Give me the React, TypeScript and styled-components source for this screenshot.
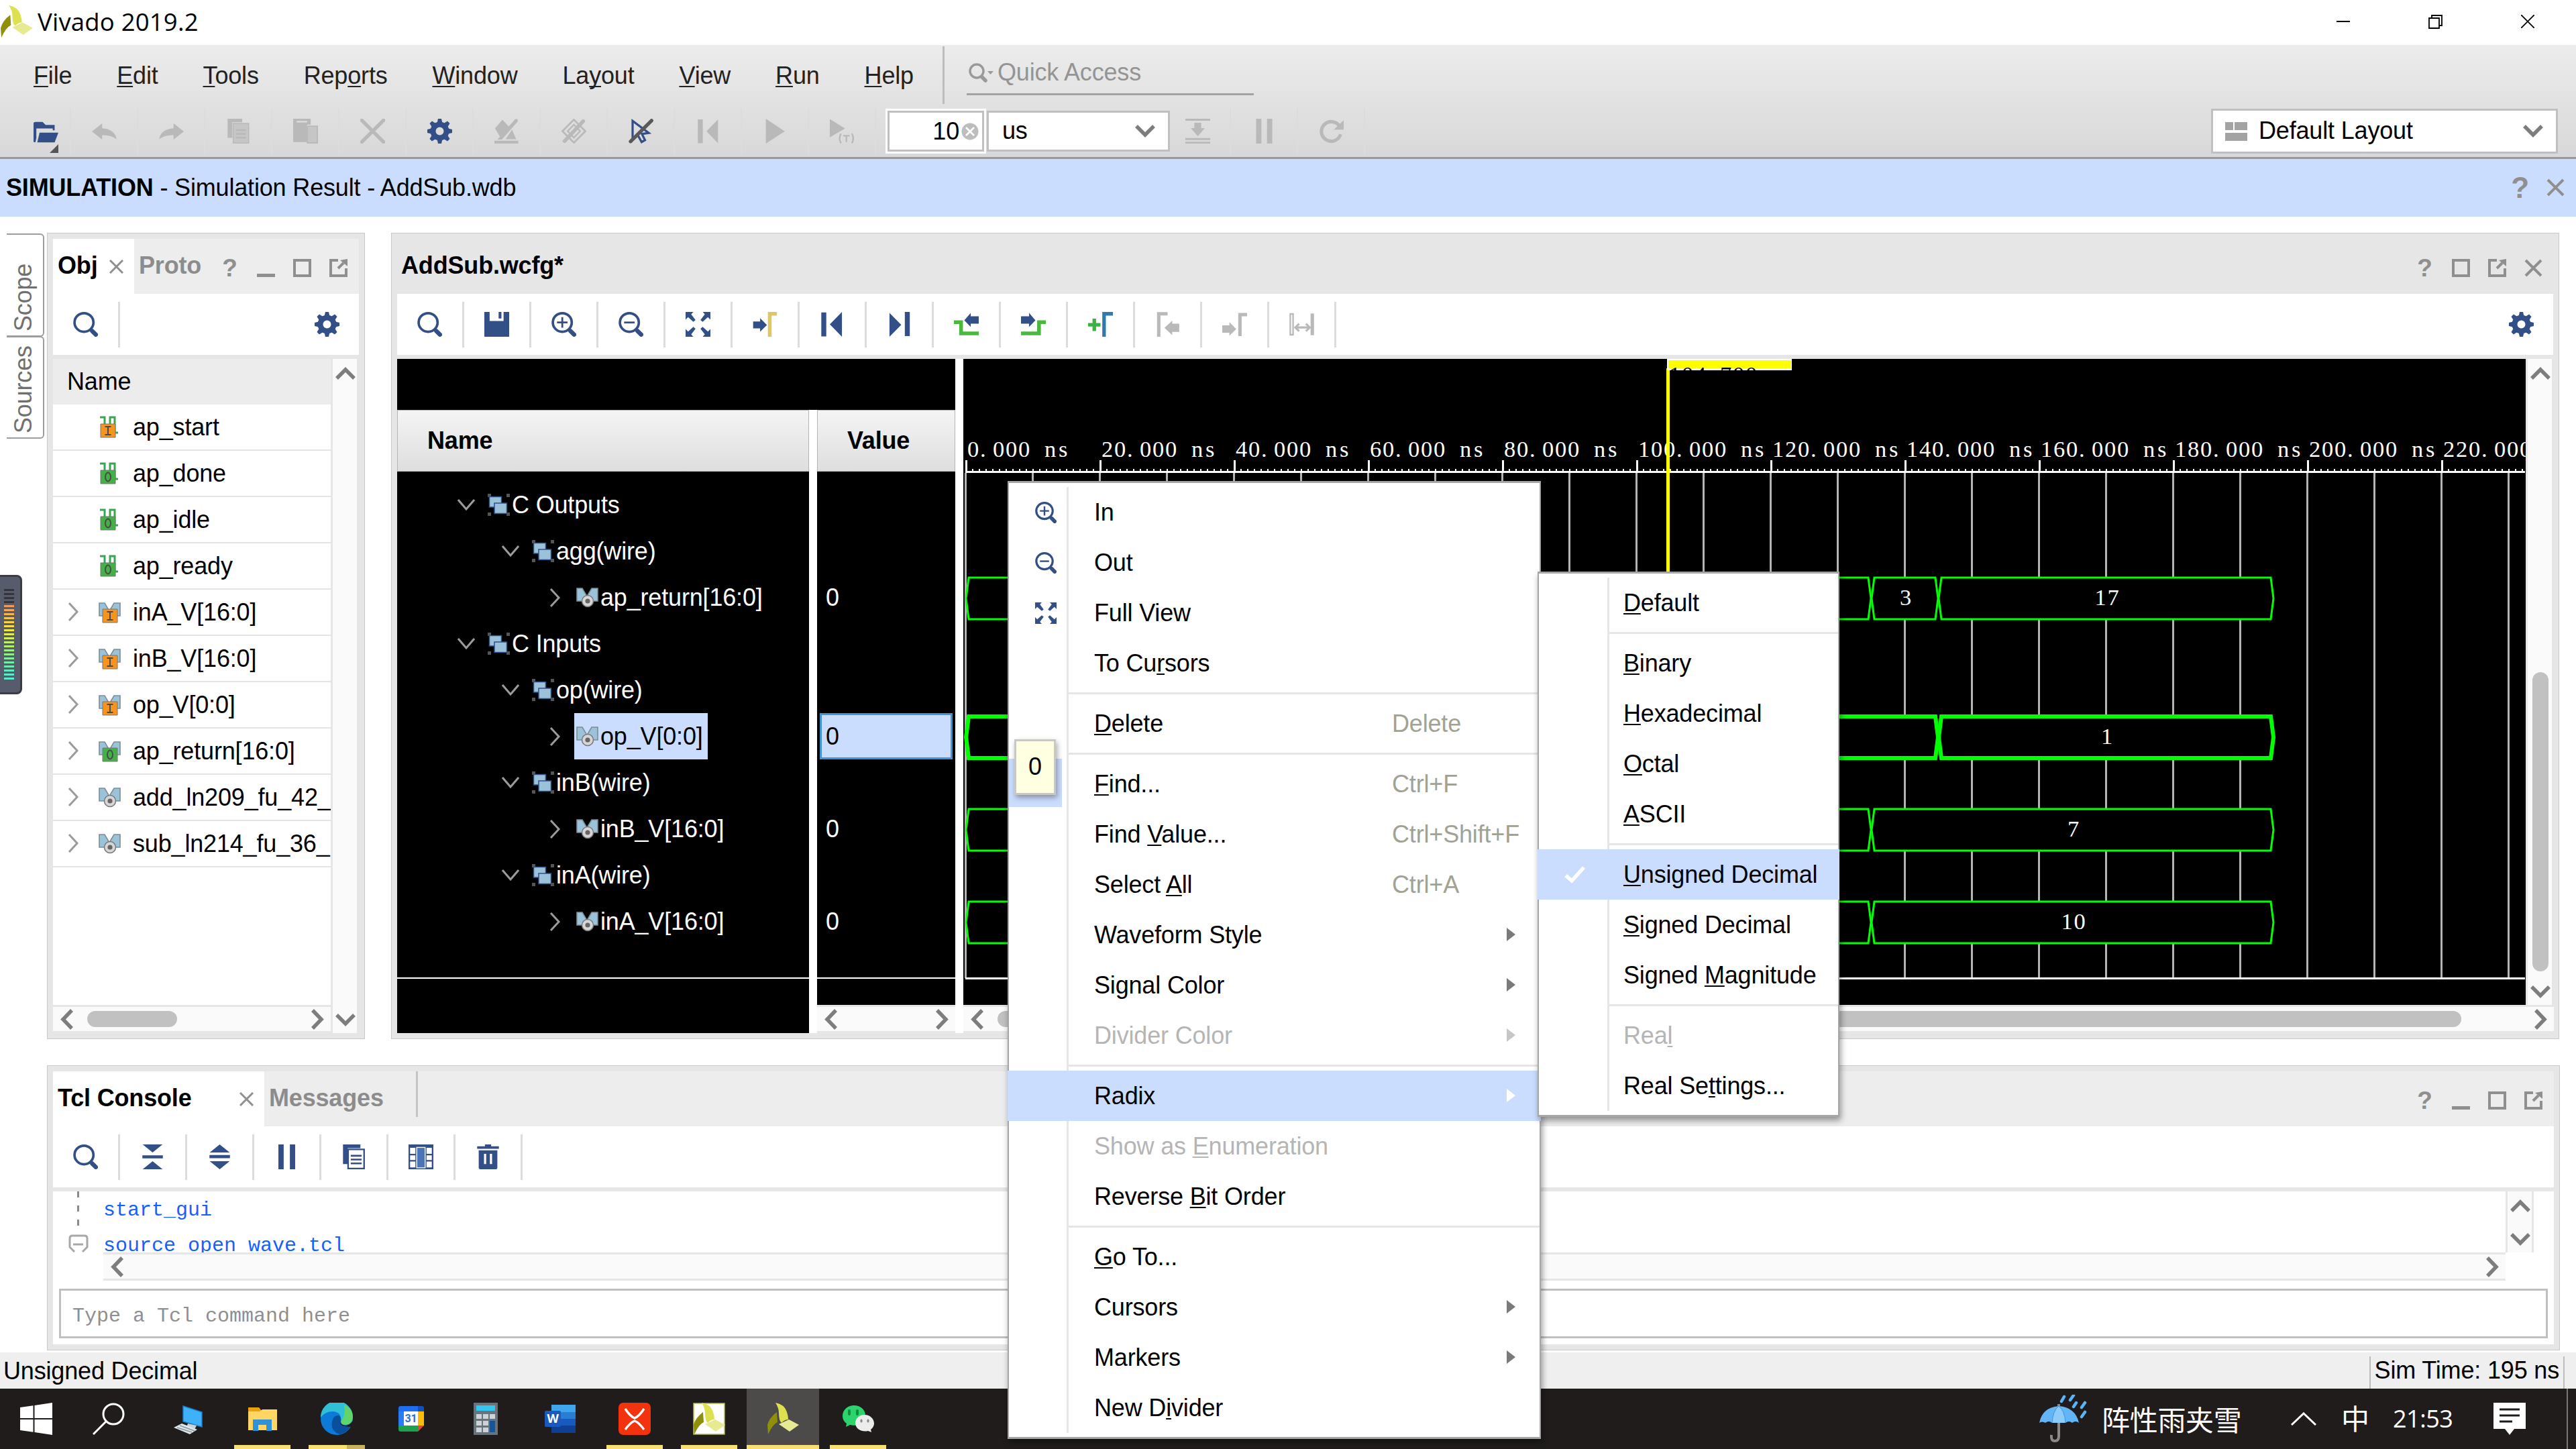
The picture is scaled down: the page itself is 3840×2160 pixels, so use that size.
import React from "react";
import styled, { createGlobalStyle, css } from "styled-components";

const NAVY = "#324f87";
const GREY = "#8f8f8f";
const DIS = "#b9b9b9";
const BLUE = "#cbddff";
const LINE = "#e6e6e6";

const Global = createGlobalStyle`
  * { box-sizing: border-box; }
  body { margin: 0; background: #fff; overflow: hidden; }
`;

const Screen = styled.div`
  position: relative;
  width: 3840px;
  height: 2160px;
  display: flex;
  flex-direction: column;
  background: #fff;
  color: #000;
  font: 36px/41px "Liberation Sans", Arial, sans-serif;
  letter-spacing: -0.17px;
  overflow: hidden;
  white-space: pre;
`;

/* ---------- drawing helpers ---------- */

const Svg = styled.svg<{ $w: number; $h?: number }>`
  display: block;
  flex: none;
  width: ${(p) => p.$w}px;
  height: ${(p) => p.$h ?? p.$w}px;
`;

const gearPath = (() => {
  const pts: string[] = [];
  for (let i = 0; i < 8; i++) {
    const a = (i * Math.PI) / 4 - Math.PI / 2;
    [[-0.26, 6.1], [-0.13, 8.2], [0.13, 8.2], [0.26, 6.1]].forEach(([d, r]) => {
      pts.push(`${(8 + r * Math.cos(a + d)).toFixed(2)} ${(8 + r * Math.sin(a + d)).toFixed(2)}`);
    });
  }
  return `M${pts.join("L")}ZM8 5.4a2.6 2.6 0 1 0 0 5.2a2.6 2.6 0 1 0 0 -5.2Z`;
})();

const ICONS: Record<string, React.ReactNode> = {
  gear: <path d={gearPath} fillRule="evenodd" fill={NAVY} />,
  search: (
    <g stroke={NAVY} fill="none">
      <ellipse cx="7" cy="6.8" rx="6.1" ry="6" strokeWidth="1.6" />
      <path d="M12.3 12.3L14.6 14.6" strokeWidth="2.8" strokeLinecap="round" />
    </g>
  ),
  zoomin: (
    <g stroke={NAVY} fill="none">
      <ellipse cx="7" cy="6.8" rx="6.1" ry="6" strokeWidth="1.6" />
      <path d="M12.3 12.3L14.6 14.6" strokeWidth="2.8" strokeLinecap="round" />
      <path d="M3.6 6.8H10.4M7 3.4V10.2" strokeWidth="1.2" />
    </g>
  ),
  zoomout: (
    <g stroke={NAVY} fill="none">
      <ellipse cx="7" cy="6.8" rx="6.1" ry="6" strokeWidth="1.6" />
      <path d="M12.3 12.3L14.6 14.6" strokeWidth="2.8" strokeLinecap="round" />
      <path d="M3.6 6.8H10.4" strokeWidth="1.2" />
    </g>
  ),
  save: (
    <path fill={NAVY} fillRule="evenodd" d="M0 0H16V16H0ZM3.4 0V5.8H12.4V0H11V4.2H9.2V0Z" />
  ),
  fit: (
    <g fill={NAVY}>
      <path d="M0 0H5L3.6 1.5L6.4 5.2L5 6.4L1.6 3.4L0 5ZM16 0V5L14.4 3.4L11 6.4L9.6 5.2L12.4 1.5L11 0ZM0 16V11L1.6 12.6L5 9.6L6.4 10.8L3.6 14.5L5 16ZM16 16H11L12.4 14.5L9.6 10.8L11 9.6L14.4 12.6L16 11Z" />
    </g>
  ),
  tocursor: (
    <g>
      <path fill={NAVY} d="M.3 6.2H4.8V4L9.2 8.4L4.8 12.8V10.6H.3Z" />
      <path d="M11 16V1.2H15.6" fill="none" stroke="#e0c766" strokeWidth="2.4" />
    </g>
  ),
  first: <path fill={NAVY} d="M1 .3H4.2V15.8H1ZM14.3 0V16L6.5 8Z" />,
  last: <path fill={NAVY} d="M11.6 0H14.8V15.6H11.6ZM1.7 .6V16L9.3 8.3Z" />,
  prevt: (
    <g>
      <path fill={NAVY} d="M16 2.8H10.8V.7L6.7 5.4L10.8 9.6V7.6H16Z" />
      <path d="M0 6.6H4.6V13.8H16" fill="none" stroke="#4ab83e" strokeWidth="2.4" />
    </g>
  ),
  nextt: (
    <g>
      <path fill={NAVY} d="M0 2.8H5.2V.7L9.3 5.4L5.2 9.6V7.6H0Z" />
      <path d="M16 6.6H11.6V13.8H0" fill="none" stroke="#4ab83e" strokeWidth="2.4" />
    </g>
  ),
  addmark: (
    <g fill="none" strokeWidth="2.3">
      <path d="M0 8.3H8M4 4.3V12.3" stroke="#3fb045" />
      <path d="M10.3 16V1.2H16" stroke="#2f7bb0" />
    </g>
  ),
  gprev: (
    <g>
      <path d="M2.3 16V1.2H8" fill="none" stroke={DIS} strokeWidth="2.2" />
      <path fill={DIS} d="M15.5 7.6H11V5.6L6 10.3L11 14.9V12.9H15.5Z" />
    </g>
  ),
  gnext: (
    <g>
      <path d="M11.4 15.6V1.7H16" fill="none" stroke={DIS} strokeWidth="2.2" />
      <path fill={DIS} d="M0 8.6H4.6V6.6L9 11L4.6 15.4V13.4H0Z" />
    </g>
  ),
  gswap: (
    <g fill="none" stroke={DIS}>
      <path d="M.6 1.3H2.4V14.7H.6Z" strokeWidth="1" />
      <path d="M14.8 1V15" strokeWidth="2.2" />
      <path d="M4 10H13M6.3 7.6L3.8 10L6.3 12.4M10.7 7.6L13.2 10L10.7 12.4" strokeWidth="1.3" />
    </g>
  ),
  folder: (
    <g fill={NAVY}>
      <path d="M0 14.5V2.6Q0 1.6 1.4 1.6H5.8L7.8 3.6H13.6V7H12.4V5.8H1.8V12L1.2 14.8Z" />
      <path d="M3.9 8.5H16L13.6 14.8H2.4Z" />
    </g>
  ),
  undo: <path fill={DIS} d="M6.6 3V6.2Q14.5 6.6 16 13.2Q12 10.2 6.6 10.6V13.4L0 8.2Z" />,
  redo: <path fill={DIS} d="M9.4 3V6.2Q1.5 6.6 0 13.2Q4 10.2 9.4 10.6V13.4L16 8.2Z" />,
  gcopy: (
    <g>
      <path fill={DIS} d="M1 0H10.4V2.3H4V12.3H1Z" />
      <path fill="#c6c6c6" stroke={DIS} strokeWidth=".6" d="M4.6 3H14.6V15.7H4.6Z" />
      <path stroke={DIS} strokeWidth="1.1" d="M6.3 7.3H12.7M6.3 9.7H12.7M6.3 12.2H12.7" />
    </g>
  ),
  gpaste: (
    <g>
      <path fill={DIS} fillRule="evenodd" d="M0 0H11.3V3.8H9V15H0ZM2.3 1.4V2.4H9V1.4Z" />
      <path fill="#c6c6c6" stroke={DIS} strokeWidth=".8" d="M9.2 4.8H15.6V15.6H9.2Z" />
    </g>
  ),
  gx: <path d="M1 1L15 15M15 1L1 15" stroke={DIS} strokeWidth="2.3" strokeLinecap="round" fill="none" />,
  gdebug: (
    <g fill={DIS}>
      <path d="M.4 6.2L5.2 .6L9.8 5.6L3.8 12Z" />
      <path d="M2 13.4L13.4 .2H15V1.8L4.8 13.4ZM0 14.2H15.4V16H0ZM7.2 13.2L11.4 7L14 13.2Z" />
    </g>
  ),
  gprobe: (
    <g fill="none" stroke={DIS}>
      <path d="M8 .6L15.4 8L8 15.4L.6 8Z" strokeWidth="1.2" />
      <path d="M8 3.8L12 8L8 12.2L4 8Z" strokeWidth="1" />
      <path d="M2 14.4L14 1.6" strokeWidth="2.4" strokeLinecap="round" />
    </g>
  ),
  nocursor: (
    <g fill="none">
      <path d="M2.6 1.4V13.6L6 10.6L8.4 15L10.6 13.8L8.6 9.8L13 9.2Z" stroke={NAVY} strokeWidth="1.4" />
      <path d="M1.3 14.6L14.8 1.2" stroke="#595959" strokeWidth="2.3" strokeLinecap="round" />
    </g>
  ),
  grestart: <path fill={DIS} d="M1.4 .4H4.6V15.8H1.4ZM14.4 .4V15.8L7 8.1Z" />,
  gplay: <path fill={DIS} d="M2 0V16L14.2 8.1Z" />,
  gplayt: (
    <g>
      <path fill={DIS} d="M0 .2V12L9.8 6.3Z" />
      <path d="M7.2 9.6Q5.4 12.6 7.2 15.8M14.2 9.6Q16 12.6 14.2 15.8M8.6 11H12.8M10.7 11V15" fill="none" stroke={DIS} />
    </g>
  ),
  gstep: <path fill={DIS} d="M0 0H16V1.3H0ZM5.8 2.6H10.2V6H12.5L8 11.3L3.5 6H5.8ZM0 12.4H16V13.7H0ZM0 14.8H16V16H0Z" />,
  gpause: <path fill={DIS} d="M2.8 0H6.2V16H2.8ZM9.8 0H13.2V16H9.8Z" />,
  grefresh: (
    <g>
      <path d="M13.4 5A6.3 6.3 0 1 0 14 10" fill="none" stroke={DIS} strokeWidth="2.2" />
      <path fill={DIS} d="M16 1V7H9.6Z" />
    </g>
  ),
  pause: <path fill={NAVY} d="M2.6 0H6V16H2.6ZM10 0H13.4V16H10Z" />,
  collapse: <path fill={NAVY} d="M1.6 0H14.4L8 5.2ZM1.4 7H14.6V9H1.4ZM8 10.8L14.4 16H1.6Z" />,
  expand: <path fill={NAVY} d="M8 0L14.4 5.2H1.6ZM1.4 6.8H14.6V8.9H1.4ZM1.6 10.8H14.4L8 16Z" />,
  copy: (
    <g>
      <path fill={NAVY} d="M1 0H12.2V2.4H4V12.6H1Z" />
      <path fill="#fff" stroke={NAVY} strokeWidth="1" d="M4.3 3.2H14.6V15.5H4.3Z" />
      <path stroke={NAVY} strokeWidth="1.1" d="M6 7.3H13M6 9.7H13M6 12.2H13" />
    </g>
  ),
  table: (
    <g>
      <path fill={NAVY} d="M0 0H16V16H0Z" />
      <path fill="#fff" d="M1 2.2H4.4V6H1ZM1 7H4.4V10H1ZM1 11H4.4V14.8H1ZM11.6 2.2H15V6H11.6ZM11.6 7H15V10H11.6ZM11.6 11H15V14.8H11.6ZM5 1.6H11V15.4H5Z" />
      <path fill="#4b73b8" d="M5.6 2.2H10.4V14.8H5.6Z" />
    </g>
  ),
  trash: (
    <path fill={NAVY} fillRule="evenodd" d="M1 1.2H6V0H10V1.2H15V2.8H1ZM2 3.8H14V15Q14 16 13 16H3Q2 16 2 15ZM5.4 6V12.6H6.8V6ZM9.2 6V12.6H10.6V6Z" />
  ),
};

const Icon = ({ name, size = 37 }: { name: string; size?: number }) => (
  <Svg $w={size} viewBox="0 0 16 16">{ICONS[name]}</Svg>
);

type Dir = "up" | "down" | "left" | "right";
const Chevron = ({ dir, color = "#7d7d7d" }: { dir: Dir; color?: string }) => {
  const v = dir === "up" || dir === "down";
  const d = { up: "M2 18L15 5L28 18", down: "M2 2L15 15L28 2", left: "M18 2L5 15.5L18 29", right: "M3 2L16 15.5L3 29" }[dir];
  return (
    <Svg $w={v ? 30 : 20} $h={v ? 20 : 31} viewBox={v ? "0 0 30 20" : "0 0 20 31"}>
      <path d={d} fill="none" stroke={color} strokeWidth="5.5" />
    </Svg>
  );
};

const Question = styled.span<{ $size?: number }>`
  font-weight: bold;
  font-size: ${(p) => p.$size ?? 37}px;
  color: ${GREY};
  width: 27px;
  text-align: center;
`;
const Glyph = ({ kind }: { kind: "min" | "max" | "pop" | "close" }) => (
  <Svg $w={27} viewBox="0 0 27 27">
    {kind === "min" && <path d="M0 22H27V27H0Z" fill={GREY} />}
    {kind === "max" && <path d="M2 2H25V25H2Z" fill="none" stroke={GREY} strokeWidth="4" />}
    {kind === "pop" && (
      <g fill="none" stroke={GREY}>
        <path d="M13 2H2V25H25V14" strokeWidth="4" />
        <path d="M13 14L21 6" strokeWidth="4" />
        <path d="M16 2L27 0V11Z" fill={GREY} stroke="none" />
      </g>
    )}
    {kind === "close" && <path d="M2 2L25 25M25 2L2 25" stroke={GREY} strokeWidth="4" fill="none" />}
  </Svg>
);
const SmallX = () => (
  <Svg $w={21} viewBox="0 0 21 21"><path d="M1 1L20 20M20 1L1 20" stroke={GREY} strokeWidth="3" /></Svg>
);

/* Marks the mnemonic letter that follows "&". */
const Key = styled.span`
  text-decoration: underline;
  text-decoration-thickness: 2px;
  text-underline-offset: 3px;
  text-decoration-skip-ink: none;
`;
const Mn = ({ t }: { t: string }) => {
  const i = t.indexOf("&");
  if (i < 0) return <span>{t}</span>;
  return <span>{t.slice(0, i)}<Key>{t[i + 1]}</Key>{t.slice(i + 2)}</span>;
};

const Logo = ({ size, white }: { size: number; white?: boolean }) => (
  <Svg $w={size} viewBox="0 0 48 48">
    {white && <path d="M1 1H47V47H1Z" fill="#fff" stroke="#b9bc4a" strokeWidth="1.5" />}
    <path d="M13 0Q26 2 30 14Q32 20 32 25Q27 25 22 30Q18 27 18 15Q18 8 13 0Z" fill="#dde04f" />
    <path d="M15 14L16 29Q9 32 2 47L1 33Q4 22 15 14Z" fill="#8f8f0a" />
    <path d="M33 25L48 33L34 43L18 32Z" fill="#e7ea93" />
  </Svg>
);

/* ---------- top bars ---------- */

const TitleBar = styled.header`
  height: 67px;
  display: flex;
  align-items: center;
  padding: 0 62px 2px 0;
`;
const LogoSlot = styled.div`width: 56px;`;
const TitleText = styled.div`
  flex: 1;
  padding-bottom: 1px;
  font: 36.5px/50px "Open Sans", "Noto Sans", sans-serif;
  letter-spacing: 0.2px;
`;
const WinButtons = styled.div`display: flex; gap: 117px;`;

const MenuArea = styled.div`
  height: 170px;
  border-bottom: 3px solid #999;
  background: linear-gradient(#ececec, #d8d8d8);
`;
const MenuBar = styled.nav`
  height: 94px;
  display: flex;
  padding-top: 2px;
  color: #222;
`;
const MenuNames = styled.div`
  width: 1405px;
  display: flex;
  align-items: center;
  padding: 0 43px 6px 50px;
  justify-content: space-between;
`;
const QuickBox = styled.div`
  height: 86px;
  border-left: 3px solid #bdbdbd;
  padding-left: 33px;
`;
const QuickInput = styled.div`
  width: 428px;
  height: 73px;
  border-bottom: 3px solid #a3a3a3;
  display: flex;
  align-items: center;
  gap: 5px;
  padding: 7px 0 0 3px;
  color: #949494;
`;
const ToolBar = styled.div`
  height: 69px;
  display: flex;
  align-items: center;
  padding-left: 6px;
`;
const ToolCell = styled.div<{ $w?: number; $shift?: number }>`
  width: ${(p) => p.$w ?? 100}px;
  height: 69px;
  border-right: 2px solid #dcdcdc;
  display: flex;
  align-items: center;
  justify-content: center;
  padding-left: ${(p) => Math.max(0, p.$shift ?? 0)}px;
  padding-right: ${(p) => Math.max(0, -(p.$shift ?? 0))}px;
`;
const FolderSlot = styled.div`
  display: flex;
  flex-direction: column;
  align-items: flex-end;
  padding-top: 14px;
`;
const NumberBox = styled.div`
  width: 150px;
  height: 67px;
  margin: 0 1px 0 14px;
  border: 3px solid #fff;
  background: #fff;
`;
const NumberInner = styled.div`
  height: 61px;
  border: 3px solid #c0c0c0;
  display: flex;
  align-items: center;
  justify-content: flex-end;
  gap: 3px;
  padding-right: 5px;
`;
const Combo = styled.div<{ $w: number; $h: number; $pl: number }>`
  width: ${(p) => p.$w}px;
  height: ${(p) => p.$h}px;
  border: 3px solid #c0c0c0;
  background: #fff;
  display: flex;
  align-items: center;
  padding: 0 19px 0 ${(p) => p.$pl}px;
  gap: 17px;
`;
const Grow = styled.div`flex: 1; min-width: 0;`;
const ComboText = styled.span`flex: 1; padding-bottom: 2px;`;
const LayoutSlot = styled.div`flex: 1; display: flex; justify-content: flex-end; padding-right: 27px;`;

const SimBar = styled.div`
  height: 86px;
  background: ${BLUE};
  display: flex;
  align-items: center;
  padding: 0 17px 2px 9px;
`;
const SimTools = styled.div`display: flex; align-items: center; gap: 26px;`;

/* ---------- panels ---------- */

const Workspace = styled.main`
  height: 1265px;
  padding: 24px 24px 0 0;
  display: flex;
`;
const SideTabs = styled.div`
  width: 70px;
  padding: 1px 4px 0 10px;
`;
const SideTab = styled.div<{ $h: number }>`
  width: 56px;
  height: ${(p) => p.$h}px;
  margin-bottom: -1px;
  border: 2px solid #9d9d9d;
  border-right: 0;
  border-radius: 6px 0 0 6px;
  writing-mode: vertical-rl;
  transform: rotate(180deg);
  color: #707070;
  padding: 6px 0 0;
  line-height: 49px;
`;
const Panel = styled.section<{ $w: number; $ml?: number; $h: number }>`
  width: ${(p) => p.$w}px;
  height: ${(p) => p.$h}px;
  margin-left: ${(p) => p.$ml ?? 0}px;
  border: 1px solid #c9c9c9;
  background: ${LINE};
  padding: 8px;
  display: flex;
  flex-direction: column;
`;
const Tabs = styled.div<{ $plain?: boolean }>`
  height: 82px;
  display: flex;
  align-items: center;
  background: ${(p) => (p.$plain ? LINE : "#ededed")};
  font-weight: bold;
`;
const Tab = styled.div<{ $w: number; $active?: boolean; $pr?: number }>`
  width: ${(p) => p.$w}px;
  height: 82px;
  padding: 0 ${(p) => p.$pr ?? 0}px 4px 7px;
  display: flex;
  align-items: center;
  justify-content: space-between;
  color: ${(p) => (p.$active ? "#000" : "#8c8c8c")};
  background: ${(p) => (p.$active ? "#fff" : "transparent")};
`;
const WaveTitle = styled.div`
  width: 600px;
  color: #000;
  padding: 0 0 4px 6px;
`;
const TabX = styled.div`padding-top: 4px;`;
const TabRule = styled.div`width: 3px; height: 68px; align-self: flex-start; background: #c4c4c4;`;
const TabTools = styled.div<{ $pr: number }>`
  flex: 1;
  display: flex;
  align-items: center;
  justify-content: flex-end;
  gap: 27px;
  padding: 4px ${(p) => p.$pr}px 0 0;
`;
const PanelBar = styled.div`
  height: 91px;
  margin-bottom: 6px;
  background: #fff;
  display: flex;
  align-items: center;
  padding-right: 29px;
`;
const PanelCell = styled.div`
  width: 100px;
  height: 68px;
  border-right: 3px solid #dcdcdc;
  display: flex;
  align-items: center;
  justify-content: center;
`;
const VScroll = styled.div`
  width: 36px;
  margin: 0 3px;
  background: #fafafa;
  display: flex;
  flex-direction: column;
  align-items: center;
  justify-content: space-between;
  padding: 11px 0 9px 2px;
`;
const HScroll = styled.div<{ $p?: number }>`
  height: 36px;
  background: #fafafa;
  display: flex;
  align-items: center;
  padding: 0 ${(p) => p.$p ?? 10}px;
`;
const HThumb = styled.div<{ $w: number; $ml: number }>`
  width: ${(p) => p.$w}px;
  height: 24px;
  margin-left: ${(p) => p.$ml}px;
  border-radius: 12px;
  background: #c1c1c1;
`;
const VThumb = styled.div`
  width: 24px;
  height: 446px;
  margin-top: 436px;
  border-radius: 12px;
  background: #c1c1c1;
`;

const ObjBody = styled.div`height: 1005px; display: flex;`;
const ObjMain = styled.div`width: 414px; display: flex; flex-direction: column;`;
const ObjHead = styled.div`height: 68px; background: #ececec; padding: 13px 0 0 21px;`;
const ObjList = styled.div`height: 895px; background: #fff; overflow: hidden; margin-bottom: 3px;`;
const ObjRow = styled.div`
  height: 69px;
  border-bottom: 2px solid #e4e4e4;
  display: flex;
  align-items: center;
  padding: 0 0 1px 17px;
`;
const ObjToggle = styled.div`width: 20px; margin-right: 31px;`;
const ObjName = styled.span`margin-left: 18px;`;

const Thin = ({ open }: { open: boolean }) => (
  <Svg $w={26} $h={28} viewBox="0 0 26 28">
    <path d={open ? "M1 6L13 20L25 6" : "M7 1L19 14L7 27"} fill="none" stroke="#9b9b9b" strokeWidth="3" />
  </Svg>
);

const badge = (k: string) => {
  if (k === "n")
    return (
      <g>
        <circle cx="17" cy="22" r="8.5" fill="#d6d6d6" stroke="#777" strokeWidth="1.5" />
        <circle cx="17" cy="22" r="3.6" fill="#666" />
      </g>
    );
  return (
    <g>
      <path d="M6 12H28V32H6Z" fill={k === "i" ? "#f7941e" : "#45b045"} stroke="#777" strokeWidth="1" />
      {k === "i" ? (
        <path d="M12.5 16H21.5M17 16V28M12.5 28H21.5" stroke="#4a4a4a" strokeWidth="2" />
      ) : (
        <ellipse cx="17" cy="22" rx="4" ry="6.5" fill="none" stroke="#4a4a4a" strokeWidth="2" />
      )}
    </g>
  );
};
const BusIcon = ({ k }: { k: string }) => (
  <Svg $w={33} viewBox="0 0 33 33">
    <path d="M1 3H9L16 15L23 3H32V22H1Z" fill="#9ac3da" stroke="#7c8d96" strokeWidth="1.6" />
    {badge(k)}
  </Svg>
);
const PinIcon = ({ k }: { k: string }) => (
  <Svg $w={33} viewBox="0 0 33 33">
    <path d="M2 2H9V16M17 16V2H24V25H29" fill="none" stroke="#3aa655" strokeWidth="3" />
    <g transform="translate(-3 0)">{badge(k)}</g>
  </Svg>
);
const GroupIcon = () => (
  <Svg $w={33} viewBox="0 0 33 33">
    <path d="M0 0H5V5H0ZM28 0H33V5H28ZM0 28H5V33H0ZM28 28H33V33H28Z" fill="#555" />
    <path d="M2.5 4.5H20.5V20H2.5Z" fill="#9bc2d8" stroke="#2f4f8a" strokeWidth="1.5" />
    <path d="M10 14H28.5V29.5H10Z" fill="#9bc2d8" stroke="#2f4f8a" strokeWidth="1.5" />
  </Svg>
);

const OBJECTS: [string, string, boolean][] = [
  ["ap_start", "i", false],
  ["ap_done", "o", false],
  ["ap_idle", "o", false],
  ["ap_ready", "o", false],
  ["inA_V[16:0]", "i", true],
  ["inB_V[16:0]", "i", true],
  ["op_V[0:0]", "i", true],
  ["ap_return[16:0]", "o", true],
  ["add_ln209_fu_42_", "n", true],
  ["sub_ln214_fu_36_p", "n", true],
];

/* ---------- waveform ---------- */

const WaveBody = styled.div`height: 1005px; display: flex; background: #fff;`;
const Names = styled.div`width: 832px; background: #000; display: flex; flex-direction: column; padding-top: 76px;`;
const Columns = styled.div`height: 929px; display: flex; gap: 12px; background: #fff;`;
const Column = styled.div<{ $w: number }>`
  width: ${(p) => p.$w}px;
  background: #000;
  color: #fff;
  display: flex;
  flex-direction: column;
`;
const ColHead = styled.div<{ $pl: number }>`
  height: 92px;
  margin-bottom: 15px;
  border: 1px solid #b5b5b8;
  background: linear-gradient(#f4f4f4, #dededf);
  color: #000;
  font-weight: bold;
  padding: 24px 0 0 ${(p) => p.$pl}px;
`;
const TreeRows = styled.div`height: 741px; border-bottom: 2px solid #fff;`;
const TreeRow = styled.div<{ $depth: number }>`
  height: 69px;
  display: flex;
  align-items: center;
  padding-left: ${(p) => 90 + p.$depth * 66}px;
`;
const TreeLabel = styled.div<{ $sel?: boolean }>`
  height: 69px;
  margin-left: 16px;
  padding: 0 7px 1px 3px;
  display: flex;
  align-items: center;
  gap: 3px;
  ${(p) => p.$sel && css`background: ${BLUE}; color: #000;`}
`;
const ValueCell = styled.div<{ $sel?: boolean }>`
  height: 69px;
  margin: 0 4px;
  padding: 0 0 1px 6px;
  display: flex;
  align-items: center;
  border: 3px solid ${(p) => (p.$sel ? "#4292d6" : "transparent")};
  ${(p) => p.$sel && css`background: ${BLUE}; color: #000;`}
`;
const ColScroll = styled.div`
  margin-top: auto;
  border-top: 3px solid ${LINE};
  border-bottom: 3px solid ${LINE};
`;
const WaveMain = styled.div`
  width: 2371px;
  margin-left: 12px;
  display: flex;
  flex-direction: column;
  background: ${LINE};
`;
const WaveTop = styled.div`height: 963px; display: flex;`;
const WaveScroll = styled.div`padding-top: 3px;`;

const TREE: [string, number, string][] = [
  ["C Outputs", 0, ""],
  ["agg(wire)", 1, ""],
  ["ap_return[16:0]", 2, "0"],
  ["C Inputs", 0, ""],
  ["op(wire)", 1, ""],
  ["op_V[0:0]", 2, "0"],
  ["inB(wire)", 1, ""],
  ["inB_V[16:0]", 2, "0"],
  ["inA(wire)", 1, ""],
  ["inA_V[16:0]", 2, "0"],
];

/* time in ns to horizontal position */
const X0 = 1440;
const tx = (ns: number) => X0 + ns * 10;

/* Fixed 19px cells; letters sit a little further right in theirs than digits. */
const Chars = ({ x, y, t, fill = "#fff" }: { x: number; y: number; t: string; fill?: string }) => (
  <text
    x={[...t].map((c, i) => x + i * 19 + (c === "s" ? 4 : c === "n" ? 2 : 1)).join(" ")}
    y={y} fill={fill} fontSize="34.5" fontFamily="Liberation Serif, serif" letterSpacing="0"
  >
    {t}
  </text>
);

const Bus = ({ y, edges, thick, labels }: { y: number; edges: number[]; thick?: boolean; labels: string[] }) => {
  const b = y + 62;
  const m = y + 31;
  return (
    <g>
      {edges.slice(0, -1).map((e, i) => {
        const l = tx(e);
        const r = tx(edges[i + 1]) - 1;
        return (
          <g key={e}>
            <path
              d={`M${l} ${m}L${l + 4} ${y}H${r - 4}L${r} ${m}L${r - 4} ${b}H${l + 4}Z`}
              fill="#000" stroke="#0f0" strokeWidth={thick ? 6 : 3}
            />
            {labels[i] && <Chars x={(l + r) / 2 - labels[i].length * 9.5 + 1} y={m + 10} t={labels[i]} />}
          </g>
        );
      })}
    </g>
  );
};

const Wave = () => (
  <Svg $w={2329} $h={963} viewBox="1436 535 2329 963">
    <rect x="1436" y="535" width="2329" height="963" fill="#000" />
    {Array.from({ length: 24 }, (_, i) => (
      <rect key={i} x={1438 + i * 100} y="705" width="3" height="753" fill="#b4b4b4" />
    ))}
    {Array.from({ length: 233 }, (_, i) => (
      <rect key={i} x={1439 + i * 10} y={i % 20 ? 699 : 686} width={i % 20 ? 2 : 3} height={i % 20 ? 4 : 17} fill="#fff" />
    ))}
    <rect x="1439" y="702" width="2325" height="3" fill="#fff" />
    <rect x="1439" y="1457" width="2325" height="3" fill="#fff" />
    {Array.from({ length: 12 }, (_, i) => (
      <Chars key={i} x={1441 + i * 200} y={681} t={`${i * 20}.000 ns`} />
    ))}
    <Bus y={861} edges={[0, 135, 145, 195]} labels={["", "3", "17"]} />
    <Bus y={1068} edges={[0, 145, 195]} labels={["", "1"]} thick />
    <Bus y={1206} edges={[0, 135, 195]} labels={["", "7"]} />
    <Bus y={1344} edges={[0, 135, 195]} labels={["", "10"]} />
    <rect x="2484" y="549" width="5" height="909" fill="#ff0" />
    <clipPath id="flag"><rect x="2485" y="535" width="186" height="17" /></clipPath>
    <g clipPath="url(#flag)">
      <rect x="2485" y="535" width="186" height="17" fill="#fff" />
      <rect x="2487" y="537" width="182" height="12" fill="#ff0" />
      <Chars x={2487} y={570} t="104.700 ns" fill="#000" />
    </g>
  </Svg>
);

/* ---------- console ---------- */

const ConsoleSlot = styled.div`height: 428px; padding-left: 70px;`;
const ConsoleBody = styled.div`height: 228px; background: #fff; display: flex; flex-direction: column;`;
const LogArea = styled.div`height: 91px; display: flex;`;
const LogGutter = styled.div`width: 75px; padding-left: 23px;`;
const LogText = styled.div`
  flex: 1;
  overflow: hidden;
  color: #1560ff;
  padding-top: 2px;
  letter-spacing: 0;
  font: 30px/53px "Liberation Mono", "Courier New", monospace;
`;
const LogScroll = styled.div`
  width: 42px;
  margin-right: 30px;
  border: solid ${LINE};
  border-width: 0 3px;
  background: #fafafa;
  display: flex;
  flex-direction: column;
  align-items: center;
  justify-content: space-between;
  padding: 11px 0 9px 1px;
`;
const LogHScroll = styled.div`
  margin: 0 72px 12px 75px;
  border: solid ${LINE};
  border-width: 3px 0;
`;
const TclInput = styled.div`
  height: 74px;
  margin: 0 9px;
  border: 3px solid #c0c0c0;
  color: #8f8f8f;
  padding: 2px 0 0 17px;
  letter-spacing: 0;
  font: 30px/72px "Liberation Mono", "Courier New", monospace;
`;

const StatusBar = styled.footer`
  height: 54px;
  background: #efefef;
  display: flex;
  justify-content: space-between;
  align-items: center;
  padding: 0 17px 0 5px;
`;
const SimTime = styled.div`
  height: 48px;
  align-self: flex-end;
  border: solid #bdbdbd;
  border-width: 0 2px;
  padding: 0 6px 0 6px;
`;

/* ---------- taskbar ---------- */

const TaskBar = styled.div`
  height: 90px;
  background: #201c1c;
  display: flex;
  align-items: stretch;
  color: #fff;
`;
const TaskCell = styled.div<{ $w?: number }>`
  width: ${(p) => p.$w ?? 111}px;
  display: flex;
  flex-direction: column;
  align-items: center;
  padding-top: 21px;
  justify-content: space-between;
`;
const Apps = styled.div`display: flex; margin-left: 8px;`;
const Running = styled.div<{ $w: number }>`
  width: ${(p) => p.$w}px;
  height: 6px;
  background: #f7df72;
`;
const EdgeRunning = styled(Running)`background: linear-gradient(90deg, #f7df72 68%, #c8b25c 68%);`;
const ActiveCell = styled(TaskCell)`width: 108px; margin: 0 2px 0 1px; background: #4d4b4a;`;
const Tray = styled.div`
  margin-left: auto;
  display: flex;
  align-items: center;
  letter-spacing: 0;
  font: 42px/60px "Noto Sans CJK SC", sans-serif;
`;
const Weather = styled.span`margin-left: 21px; width: 282px; letter-spacing: -0.3px;`;
const Ime = styled.span`margin: 0 35px 0 37px; position: relative; top: -2px;`;
const Clock = styled.span`
  width: 150px;
  font: 36px/50px "Open Sans", "Noto Sans", sans-serif;
  letter-spacing: -0.5px;
`;
const TrayRule = styled.div`width: 2px; height: 90px; margin: 0 12px 0 61px; background: #777;`;

const T: Record<string, React.ReactNode> = {
  win: <path fill="#fff" d="M0 7L19.5 4.2V23H0ZM21.5 3.9L48 0V23H21.5ZM0 25H19.5V43.8L0 41ZM21.5 25H48V48L21.5 44.1Z" />,
  find: (
    <g fill="none" stroke="#fff" strokeWidth="3"><circle cx="31" cy="17" r="15" /><path d="M20 28L1 47" /></g>
  ),
  pc: (
    <g>
      <path d="M17 5L45 14V36L17 28Z" fill="#3fb1fb" stroke="#1c7ecb" strokeWidth="1.5" />
      <path d="M24 31L37 34L34 40L22 37Z" fill="#c9d2d8" />
      <path d="M3 37L15 31L38 40L27 47Z" fill="#dfe6ea" />
      <path d="M8 37L30 44M12 34L34 42" stroke="#8b979f" strokeWidth="1.5" />
    </g>
  ),
  files: (
    <g>
      <path d="M3 7H19L23 12H28V20H3Z" fill="#e6a20f" />
      <path d="M3 13H20L24 10H46V41H3Z" fill="#ffd563" />
      <path d="M10 25H38V42H30V33H18V42H10Z" fill="#2f92d8" />
    </g>
  ),
  edge: (
    <g>
      <circle cx="24" cy="24" r="24" fill="#0c7ad6" />
      <path d="M0 22A24 24 0 0 1 48 21Q48 32 37 33Q29 33 30 28Q32 14 18 13Q7 13 0 22Z" fill="#2fc0d8" />
      <path d="M35 3Q48 9 48 21Q47 32 37 33Q29 33 30 28Q38 20 35 3Z" fill="#5fd56a" />
      <path d="M17 28Q19 18 27 19Q31 21 30 28Q30 34 44 36Q38 46 28 47Q14 42 17 28Z" fill="#0a4f9e" />
      <path d="M30 28Q28 33 37 34Q43 34 48 27V36H44Q31 36 29 31Z" fill="#201c1c" />
    </g>
  ),
  calc: (
    <g>
      <path d="M6 0H42V48H6Z" fill="#69737c" />
      <path d="M10 4H38V12H10Z" fill="#35c5f2" />
      <path d="M10 17H18V24H10ZM20 17H28V24H20ZM30 17H38V24H30ZM10 27H18V34H10ZM20 27H28V34H20ZM10 37H18V44H10ZM20 37H28V44H20Z" fill="#ccd3d8" />
      <path d="M30 27H38V44H30Z" fill="#17559b" />
    </g>
  ),
  xm: (
    <g>
      <rect width="48" height="48" rx="7" fill="#f2330d" />
      <path d="M10 9Q17 20 24 23Q31 20 38 9M10 40Q17 30 24 27Q31 30 38 40" fill="none" stroke="#fff" strokeWidth="3.4" />
    </g>
  ),
  chat: (
    <g>
      <path d="M18 4C8 4 1 11 1 20Q1 27 7 31L6 36L12 33Q31 37 35 21C36 11 28 4 18 4Z" fill="#2bd46c" />
      <path d="M34 18C25 18 20 24 20 31C21 40 30 44 39 42L44 44L43 40Q48 36 48 31C48 24 42 18 34 18Z" fill="#ececec" />
      <path d="M11 12V17M23 12V17" stroke="#128a42" strokeWidth="4" strokeLinecap="round" />
      <path d="M29 26V28M39 26V28" stroke="#888" strokeWidth="3" strokeLinecap="round" />
    </g>
  ),
  note: (
    <g>
      <path d="M0 0H48V39H31L24 48L17 39H0Z" fill="#fff" />
      <path d="M9 10H39M9 19H39M9 28H28" stroke="#1d1d1b" strokeWidth="3" />
    </g>
  ),
};
const CalIcon = () => (
  <Svg $w={48} viewBox="0 0 48 48">
    <path d="M5 8Q5 5 8 5H34V13H5Z" fill="#1f6df2" />
    <path d="M34 5H40Q43 5 43 8V13H34Z" fill="#1450b8" />
    <path d="M5 13H13V34H5Z" fill="#2a7bf6" />
    <path d="M34 13H43V34H34Z" fill="#fbbc04" />
    <path d="M5 34H34V43H8Q5 43 5 40Z" fill="#1ba24a" />
    <path d="M34 34H43L34 43Z" fill="#ea4335" />
    <path d="M13 13H34V34H13Z" fill="#fff" />
    <text x="23.5" y="29" fontSize="16" fontWeight="bold" fill="#2a6fe0" textAnchor="middle" fontFamily="Roboto, sans-serif">31</text>
  </Svg>
);
const WordIcon = () => (
  <Svg $w={48} viewBox="0 0 48 48">
    <path d="M11 3H47V14H11Z" fill="#41a5ee" />
    <path d="M11 14H47V24H11Z" fill="#2b7cd3" />
    <path d="M11 24H47V34H11Z" fill="#185abd" />
    <path d="M11 34H47V45H11Z" fill="#103f91" />
    <rect x="1" y="12" width="24" height="24" rx="2" fill="#185abd" />
    <text x="13" y="30" fontSize="18" fontWeight="bold" fill="#fff" textAnchor="middle" fontFamily="Open Sans, sans-serif">W</text>
  </Svg>
);
const TIcon = ({ n }: { n: string }) => <Svg $w={48} viewBox="0 0 48 48">{T[n]}</Svg>;
const Umbrella = () => (
  <Svg $w={72} viewBox="0 0 72 72">
    <path d="M29 14V62Q29 69 23 69Q17 69 18 60" fill="none" stroke="#8b8986" strokeWidth="4" />
    <path d="M0 42Q4 19 29 17Q54 19 59 42Q54 38 49 42Q44 38 39 42Q34 38 29 42Q24 38 19 42Q14 38 9 42Q4 39 0 42Z" fill="#62b6f8" />
    <path d="M19 42Q20 24 29 17Q38 24 39 42" fill="#8ccbfb" stroke="#3b93df" />
    <path d="M37 3L33 10M51 1L46 8M55 12L51 18M68 12L63 19M68 26L63 33" stroke="#58b4fb" strokeWidth="4.5" strokeLinecap="round" />
  </Svg>
);

/* ---------- left gadget ---------- */

const Gadget = styled.div`
  position: absolute;
  left: -8px;
  top: 857px;
  width: 41px;
  height: 178px;
  border: 3px solid #3a3c44;
  border-radius: 8px;
  background: #565c6b;
  padding: 18px 0 0 11px;
  display: flex;
  flex-direction: column;
  gap: 3px;
`;
const Led = styled.div<{ $c: string }>`width: 15px; height: 3px; background: ${(p) => p.$c};`;
const LEDS = ["#33353d", "#33353d", "#33353d", "#33353d", "#f09a5c", "#f3a957", "#f4b552", "#f6c54e", "#f7d24a", "#f8df48", "#efe64a", "#e2ec55", "#d0f05e", "#c0ef69", "#b0ef74", "#a0ee80", "#90ed8c", "#82ec98", "#76eba4", "#6aebb2", "#60eabd", "#5ceac8", "#5aead0"];

/* ---------- context menus ---------- */

const MenuBox = styled.div<{ $x: number; $y: number; $w: number }>`
  position: absolute;
  left: ${(p) => p.$x}px;
  top: ${(p) => p.$y}px;
  width: ${(p) => p.$w}px;
  border: solid #a6a6a6;
  border-width: 3px 2px;
  padding: 6px 0;
  background: #fff;
  box-shadow: 2px 5px 9px rgba(0, 0, 0, 0.4);
`;
const Item = styled.div<{ $cols: string; $hot?: boolean; $off?: boolean }>`
  height: 75px;
  margin: 0 ${(p) => (p.$hot ? -2 : 0)}px;
  padding: 0 ${(p) => (p.$hot ? 2 : 0)}px;
  display: grid;
  grid-template-columns: ${(p) => p.$cols};
  align-items: center;
  color: ${(p) => (p.$off ? "#b5b5b5" : "#000")};
  background: ${(p) => (p.$hot ? BLUE : "transparent")};
`;
const Gutter = styled.div<{ $pl?: number; $clear?: boolean }>`
  height: 100%;
  border-right: 3px solid ${(p) => (p.$clear ? "transparent" : LINE)};
  padding-left: ${(p) => p.$pl ?? 0}px;
  display: flex;
  align-items: center;
`;
const ItemText = styled.div<{ $pl: number }>`padding: 0 0 1px ${(p) => p.$pl}px;`;
const Short = styled.div`color: #a2a293; padding-bottom: 1px; display: flex; align-items: center;`;
const Arrow = styled.div<{ $c: string }>`
  width: 0;
  height: 0;
  margin-left: 171px;
  border: solid transparent;
  border-width: 10px 0 10px 13px;
  border-left-color: ${(p) => p.$c};
`;
const SepRow = styled.div<{ $g: number }>`
  height: 15px;
  display: grid;
  grid-template-columns: ${(p) => p.$g}px 1fr;
  align-items: center;
`;
const SepLine = styled.div`height: 3px; background: ${LINE};`;
const Hover = styled.div`
  position: absolute;
  left: 1504px;
  top: 1131px;
  width: 79px;
  height: 72px;
  background: ${BLUE};
`;
const Tip = styled.div`
  position: absolute;
  left: 1512px;
  top: 1102px;
  width: 62px;
  height: 83px;
  border: 3px solid #c9c9c3;
  background: #ffffe1;
  box-shadow: 2px 4px 8px rgba(0, 0, 0, 0.35);
  text-align: center;
  line-height: 75px;
`;

type Entry = { t: string; icon?: string; short?: string; sub?: boolean; off?: boolean; hot?: boolean } | null;
const MAIN: Entry[] = [
  { t: "In", icon: "zoomin" },
  { t: "Out", icon: "zoomout" },
  { t: "Full View", icon: "fit" },
  { t: "To Cu&rsors" },
  null,
  { t: "&Delete", short: "Delete" },
  null,
  { t: "&Find...", short: "Ctrl+F" },
  { t: "Find &Value...", short: "Ctrl+Shift+F" },
  { t: "Select &All", short: "Ctrl+A" },
  { t: "Waveform Style", sub: true },
  { t: "Signal Color", sub: true },
  { t: "Divider Color", sub: true, off: true },
  null,
  { t: "Radix", sub: true, hot: true },
  { t: "Show as &Enumeration", off: true },
  { t: "Reverse &Bit Order" },
  null,
  { t: "&Go To..." },
  { t: "Cursors", sub: true },
  { t: "Markers", sub: true },
  { t: "New D&ivider" },
];
const RADIX: Entry[] = [
  { t: "&Default" },
  null,
  { t: "&Binary" },
  { t: "&Hexadecimal" },
  { t: "&Octal" },
  { t: "&ASCII" },
  null,
  { t: "&Unsigned Decimal", hot: true },
  { t: "&Signed Decimal" },
  { t: "Signed &Magnitude" },
  null,
  { t: "Rea&l", off: true },
  { t: "Real Se&ttings..." },
];

const MAIN_TOOLS = ["undo", "redo", "gcopy", "gpaste", "gx", "gear", "gdebug", "gprobe", "nocursor", "grestart", "gplay", "gplayt"];
const WAVE_TOOLS = ["search", "save", "zoomin", "zoomout", "fit", "tocursor", "first", "last", "prevt", "nextt", "addmark", "gprev", "gnext", "gswap"];
const TCL_TOOLS = ["search", "collapse", "expand", "pause", "copy", "table", "trash"];

export default function App() {
  return (
    <>
      <Global />
      <Screen>
        <TitleBar>
          <LogoSlot><Logo size={49} /></LogoSlot>
          <TitleText>Vivado 2019.2</TitleText>
          <WinButtons>
            <Svg $w={20} viewBox="0 0 20 20"><path d="M0 10H20" stroke="#000" strokeWidth="2" /></Svg>
            <Svg $w={21} viewBox="0 0 21 21"><path d="M1 5H16V20H1ZM5 5V1H20V16H16" fill="none" stroke="#000" strokeWidth="1.8" /></Svg>
            <Svg $w={20} viewBox="0 0 20 20"><path d="M0 0L20 20M20 0L0 20" stroke="#000" strokeWidth="1.8" /></Svg>
          </WinButtons>
        </TitleBar>

        <MenuArea>
          <MenuBar>
            <MenuNames>
              {["&File", "&Edit", "&Tools", "Rep&orts", "&Window", "La&yout", "&View", "&Run", "&Help"].map((m) => <Mn key={m} t={m} />)}
            </MenuNames>
            <QuickBox>
              <QuickInput>
                <Svg $w={38} $h={30} viewBox="0 0 38 30">
                  <g fill="none" stroke="#999"><circle cx="12" cy="13" r="10" strokeWidth="3.4" /><path d="M20 22L25 27" strokeWidth="5.5" strokeLinecap="round" /></g>
                  <path d="M28 13H37L32.500 18Z" fill="#999" />
                </Svg>
                Quick Access
              </QuickInput>
            </QuickBox>
          </MenuBar>
          <ToolBar>
            <ToolCell $shift={26}>
              <FolderSlot>
                <Icon name="folder" />
                <Svg $w={13} viewBox="0 0 13 13"><path d="M13 0V13H0Z" fill="#555" /></Svg>
              </FolderSlot>
            </ToolCell>
            {MAIN_TOOLS.map((n) => <ToolCell key={n}><Icon name={n} /></ToolCell>)}
            <NumberBox>
              <NumberInner>
                10
                <Svg $w={26} viewBox="0 0 26 26"><circle cx="13" cy="13" r="12.500" fill="#bdbdbd" /><path d="M7 7L19 19M19 7L7 19" stroke="#fff" strokeWidth="2.600" /></Svg>
              </NumberInner>
            </NumberBox>
            <Combo $w={273} $h={61} $pl={20}><ComboText>us</ComboText><Chevron dir="down" /></Combo>
            <ToolCell $w={91} $shift={-7}><Icon name="gstep" /></ToolCell>
            <ToolCell><Icon name="gpause" /></ToolCell>
            <ToolCell><Icon name="grefresh" /></ToolCell>
            <LayoutSlot>
              <Combo $w={517} $h={67} $pl={18}>
                <Svg $w={33} $h={28} viewBox="0 0 33 28"><path d="M0 0H12V12H0ZM14 0H33V12H14ZM0 16H33V28H0Z" fill="#a3a3a3" /></Svg>
                <ComboText>Default Layout</ComboText>
                <Chevron dir="down" />
              </Combo>
            </LayoutSlot>
          </ToolBar>
        </MenuArea>

        <SimBar>
          <Grow><b>SIMULATION</b> - Simulation Result - AddSub.wdb</Grow>
          <SimTools><Question $size={44}>?</Question><Glyph kind="close" /></SimTools>
        </SimBar>

        <Workspace>
          <SideTabs>
            <SideTab $h={154}>Scope</SideTab>
            <SideTab $h={153}>Sources</SideTab>
          </SideTabs>

          <Panel $w={474} $h={1202}>
            <Tabs>
              <Tab $w={121} $active $pr={16}>Obj<TabX><SmallX /></TabX></Tab>
              <Tab $w={110}>Proto</Tab>
              <TabTools $pr={17}><Question>?</Question><Glyph kind="min" /><Glyph kind="max" /><Glyph kind="pop" /></TabTools>
            </Tabs>
            <PanelBar>
              <PanelCell><Icon name="search" /></PanelCell>
              <Grow />
              <Icon name="gear" />
            </PanelBar>
            <ObjBody>
              <ObjMain>
                <ObjHead>Name</ObjHead>
                <ObjList>
                  {OBJECTS.map(([n, k, bus]) => (
                    <ObjRow key={n}>
                      <ObjToggle>{bus && <Thin open={false} />}</ObjToggle>
                      {bus ? <BusIcon k={k} /> : <PinIcon k={k} />}
                      <ObjName>{n}</ObjName>
                    </ObjRow>
                  ))}
                </ObjList>
                <HScroll><Chevron dir="left" /><HThumb $w={134} $ml={21} /><Grow /><Chevron dir="right" /></HScroll>
              </ObjMain>
              <VScroll><Chevron dir="up" /><Chevron dir="down" /></VScroll>
            </ObjBody>
          </Panel>

          <Panel $w={3232} $h={1202} $ml={39}>
            <Tabs $plain>
              <WaveTitle>AddSub.wcfg*</WaveTitle>
              <TabTools $pr={16}><Question>?</Question><Glyph kind="max" /><Glyph kind="pop" /><Glyph kind="close" /></TabTools>
            </Tabs>
            <PanelBar>
              {WAVE_TOOLS.map((n) => <PanelCell key={n}><Icon name={n} /></PanelCell>)}
              <Grow />
              <Icon name="gear" />
            </PanelBar>
            <WaveBody>
              <Names>
                <Columns>
                  <Column $w={614}>
                    <ColHead $pl={44}>Name</ColHead>
                    <TreeRows>
                      {TREE.map(([n, d]) => (
                        <TreeRow key={n} $depth={d}>
                          <Thin open={d < 2} />
                          <TreeLabel $sel={n === "op_V[0:0]"}>{d < 2 ? <GroupIcon /> : <BusIcon k="n" />}{n}</TreeLabel>
                        </TreeRow>
                      ))}
                    </TreeRows>
                  </Column>
                  <Column $w={206}>
                    <ColHead $pl={44}>Value</ColHead>
                    <TreeRows>
                      {TREE.map(([n, , v]) => <ValueCell key={n} $sel={n === "op_V[0:0]"}>{v}</ValueCell>)}
                    </TreeRows>
                    <ColScroll><HScroll><Chevron dir="left" /><Grow /><Chevron dir="right" /></HScroll></ColScroll>
                  </Column>
                </Columns>
              </Names>
              <WaveMain>
                <WaveTop>
                  <Wave />
                  <VScroll><Chevron dir="up" /><VThumb /><Grow /><Chevron dir="down" /></VScroll>
                </WaveTop>
                <WaveScroll>
                  <HScroll><Chevron dir="left" /><HThumb $w={2182} $ml={21} /><Grow /><Chevron dir="right" /></HScroll>
                </WaveScroll>
              </WaveMain>
            </WaveBody>
          </Panel>
        </Workspace>

        <ConsoleSlot>
          <Panel $w={3746} $h={425}>
            <Tabs>
              <Tab $w={315} $active $pr={16}>Tcl Console<TabX><SmallX /></TabX></Tab>
              <Tab $w={226}>Messages</Tab>
              <TabRule />
              <TabTools $pr={17}><Question>?</Question><Glyph kind="min" /><Glyph kind="max" /><Glyph kind="pop" /></TabTools>
            </Tabs>
            <PanelBar>{TCL_TOOLS.map((n) => <PanelCell key={n}><Icon name={n} /></PanelCell>)}</PanelBar>
            <ConsoleBody>
              <LogArea>
                <LogGutter>
                  <Svg $w={30} $h={91} viewBox="0 0 30 91">
                    <path d="M14.500 0V9M14.500 21V30M14.500 42V51" stroke="#8a8a8a" strokeWidth="3" />
                    <path d="M9 90L2 83V70Q2 66 6 66H24Q28 66 28 70V83L21 90M7 79H22" fill="none" stroke="#a8a8a8" strokeWidth="3" />
                  </Svg>
                </LogGutter>
                <LogText>{"start_gui\nsource open_wave.tcl"}</LogText>
                <LogScroll><Chevron dir="up" /><Chevron dir="down" /></LogScroll>
              </LogArea>
              <LogHScroll><HScroll><Chevron dir="left" /><Grow /><Chevron dir="right" /></HScroll></LogHScroll>
              <TclInput>Type a Tcl command here</TclInput>
            </ConsoleBody>
          </Panel>
        </ConsoleSlot>

        <StatusBar>
          <span>Unsigned Decimal</span>
          <SimTime>Sim Time: 195 ns</SimTime>
        </StatusBar>

        <TaskBar>
          <TaskCell $w={108}><TIcon n="win" /></TaskCell>
          <TaskCell $w={108}><TIcon n="find" /></TaskCell>
          <Apps>
            <TaskCell><TIcon n="pc" /></TaskCell>
            <TaskCell><TIcon n="files" /><Running $w={84} /></TaskCell>
            <TaskCell><TIcon n="edge" /><EdgeRunning $w={84} /></TaskCell>
            <TaskCell><CalIcon /></TaskCell>
            <TaskCell><TIcon n="calc" /></TaskCell>
            <TaskCell><WordIcon /></TaskCell>
            <TaskCell><TIcon n="xm" /><Running $w={84} /></TaskCell>
            <TaskCell><Logo size={48} white /><Running $w={84} /></TaskCell>
            <ActiveCell><Logo size={48} /><Running $w={108} /></ActiveCell>
            <TaskCell><TIcon n="chat" /><Running $w={84} /></TaskCell>
          </Apps>
          <Tray>
            <Umbrella />
            <Weather>阵性雨夹雪</Weather>
            <Svg $w={38} $h={20} viewBox="0 0 38 20"><path d="M1 19L19 2L37 19" fill="none" stroke="#fff" strokeWidth="3" /></Svg>
            <Ime>中</Ime>
            <Clock>21:53</Clock>
            <TIcon n="note" />
            <TrayRule />
          </Tray>
        </TaskBar>

        <Gadget>{LEDS.map((c, i) => <Led key={i} $c={c} />)}</Gadget>

        <MenuBox $x={1502} $y={717} $w={795}>
          {MAIN.map((e, i) =>
            e ? (
              <Item key={i} $cols="89px 482px 1fr" $hot={e.hot} $off={e.off}>
                <Gutter $pl={39} $clear={e.hot}>{e.icon && <Icon name={e.icon} size={32} />}</Gutter>
                <ItemText $pl={38}><Mn t={e.t} /></ItemText>
                <Short>{e.short}{e.sub && <Arrow $c={e.hot ? "#fff" : e.off ? "#c6c6c6" : "#7a7a7a"} />}</Short>
              </Item>
            ) : (
              <SepRow key={i} $g={89}><Gutter /><SepLine /></SepRow>
            )
          )}
        </MenuBox>
        <Hover />
        <Tip>0</Tip>

        <MenuBox $x={2292} $y={852} $w={450}>
          {RADIX.map((e, i) =>
            e ? (
              <Item key={i} $cols="105px 1fr" $hot={e.hot} $off={e.off}>
                <Gutter $pl={38} $clear={e.hot}>
                  {e.hot && <Svg $w={32} $h={26} viewBox="0 0 32 26"><path d="M2 14L11 22L29 2" fill="none" stroke="#fff" strokeWidth="5.500" /></Svg>}
                </Gutter>
                <ItemText $pl={21}><Mn t={e.t} /></ItemText>
              </Item>
            ) : (
              <SepRow key={i} $g={105}><Gutter /><SepLine /></SepRow>
            )
          )}
        </MenuBox>
      </Screen>
    </>
  );
}
